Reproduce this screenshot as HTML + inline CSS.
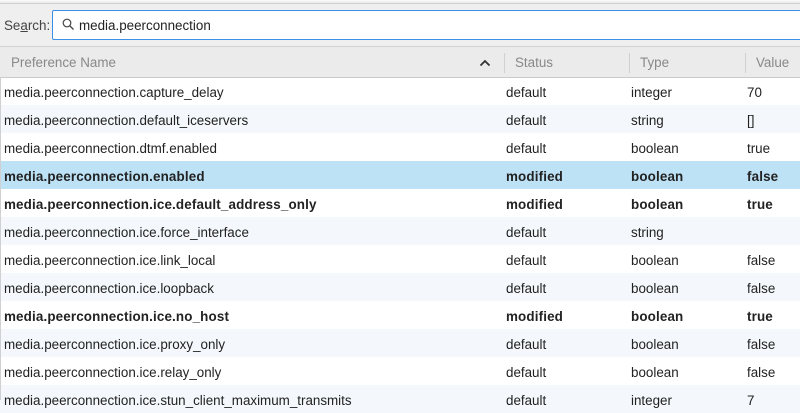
<!DOCTYPE html>
<html><head><style>
body{margin:0;width:800px;height:400px;overflow:hidden;background:#fff;font-family:"Liberation Sans",sans-serif;font-size:13.4px;color:#222;position:relative}
.top{position:absolute;left:0;top:0;width:800px;height:46px;background:#efefef;border-top:1px solid #fafafa}
.top:before{content:"";position:absolute;left:0;top:2px;width:800px;height:1px;background:#cfcfcf}
.lab{position:absolute;left:4px;top:18px;color:#444}
.box{position:absolute;left:52px;top:10px;width:760px;height:28px;background:#fff;border:1px solid #3d8ee6;border-radius:2px}
.box span{position:absolute;left:26px;top:7px;color:#222}
.hdr{position:absolute;left:0;top:46px;width:800px;height:30px;background:#ebebeb;border-top:1px solid #d3d3d3;border-bottom:1px solid #cacaca;color:#888}
.hdr div{position:absolute;top:8px}
.sep{position:absolute;top:6px;width:1px;height:20px;background:#d0d0d0}
.row{position:absolute;left:0;width:800px;height:28px}
.row div{position:absolute;top:8px;white-space:nowrap}
.alt{background:#f4f7fb}.sel{background:#bde2f6}
.b{font-weight:bold;letter-spacing:0.15px}
.lb{position:absolute;left:0;top:77px;width:1px;height:323px;background:#d0d0d0}
</style></head><body>
<div class="top"></div>
<div class="lab">Se<u>a</u>rch:</div>
<div class="box"><svg style="position:absolute;left:9px;top:7px" width="13" height="13"><circle cx="5" cy="5" r="3.8" fill="none" stroke="#444" stroke-width="1.2"/><line x1="8" y1="8" x2="11.5" y2="11.5" stroke="#444" stroke-width="1.3"/></svg><span>media.peerconnection</span></div>
<div class="hdr">
<div style="left:11px">Preference Name</div>
<svg style="position:absolute;left:479px;top:12px" width="12" height="8"><path d="M1.5 6.5 L6 2 L10.5 6.5" fill="none" stroke="#333" stroke-width="1.8"/></svg>
<span class="sep" style="left:504px"></span><div style="left:515px">Status</div>
<span class="sep" style="left:629px"></span><div style="left:640px">Type</div>
<span class="sep" style="left:745px"></span><div style="left:756px">Value</div>
</div>
<div class="row" style="top:77px"><div style="left:4px">media.peerconnection.capture_delay</div><div style="left:506px">default</div><div style="left:631px">integer</div><div style="left:747px">70</div></div>
<div class="row alt" style="top:105px"><div style="left:4px">media.peerconnection.default_iceservers</div><div style="left:506px">default</div><div style="left:631px">string</div><div style="left:747px">[]</div></div>
<div class="row" style="top:133px"><div style="left:4px">media.peerconnection.dtmf.enabled</div><div style="left:506px">default</div><div style="left:631px">boolean</div><div style="left:747px">true</div></div>
<div class="row sel b" style="top:161px"><div style="left:4px">media.peerconnection.enabled</div><div style="left:506px">modified</div><div style="left:631px">boolean</div><div style="left:747px">false</div></div>
<div class="row b" style="top:189px"><div style="left:4px">media.peerconnection.ice.default_address_only</div><div style="left:506px">modified</div><div style="left:631px">boolean</div><div style="left:747px">true</div></div>
<div class="row alt" style="top:217px"><div style="left:4px">media.peerconnection.ice.force_interface</div><div style="left:506px">default</div><div style="left:631px">string</div></div>
<div class="row" style="top:245px"><div style="left:4px">media.peerconnection.ice.link_local</div><div style="left:506px">default</div><div style="left:631px">boolean</div><div style="left:747px">false</div></div>
<div class="row alt" style="top:273px"><div style="left:4px">media.peerconnection.ice.loopback</div><div style="left:506px">default</div><div style="left:631px">boolean</div><div style="left:747px">false</div></div>
<div class="row b" style="top:301px"><div style="left:4px">media.peerconnection.ice.no_host</div><div style="left:506px">modified</div><div style="left:631px">boolean</div><div style="left:747px">true</div></div>
<div class="row alt" style="top:329px"><div style="left:4px">media.peerconnection.ice.proxy_only</div><div style="left:506px">default</div><div style="left:631px">boolean</div><div style="left:747px">false</div></div>
<div class="row" style="top:357px"><div style="left:4px">media.peerconnection.ice.relay_only</div><div style="left:506px">default</div><div style="left:631px">boolean</div><div style="left:747px">false</div></div>
<div class="row alt" style="top:385px"><div style="left:4px">media.peerconnection.ice.stun_client_maximum_transmits</div><div style="left:506px">default</div><div style="left:631px">integer</div><div style="left:747px">7</div></div>
<div class="lb"></div>
</body></html>
